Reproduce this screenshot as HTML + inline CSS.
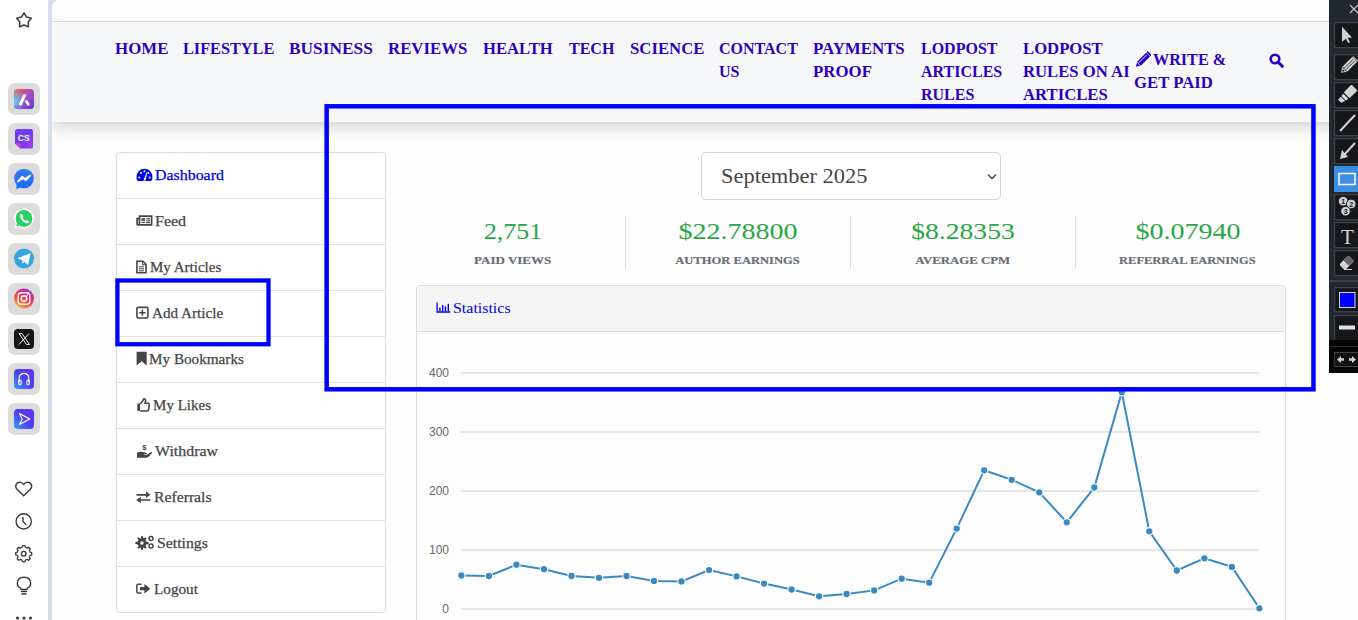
<!DOCTYPE html>
<html><head><meta charset="utf-8">
<style>
*{margin:0;padding:0;box-sizing:border-box}
html,body{width:1358px;height:620px;overflow:hidden;background:#fff;font-family:"Liberation Serif",serif}
.abs{position:absolute}
#strip{left:48px;top:0;width:20px;height:620px;background:#d4dfe9}
#page{left:52px;top:0;width:1316px;height:620px;background:#fdfdfd;border-top-left-radius:8px;overflow:hidden}
#topbar{left:0;top:0;width:100%;height:22px;background:#fefefe;border-bottom:1px solid #dcdcdc}
#nav{left:0;top:22px;width:100%;height:100px;background:#f6f7f9;box-shadow:0 5px 13px rgba(0,0,0,.17)}
.nv{position:absolute;font:700 16px/22.9px "Liberation Serif",serif;color:#2e00b8;white-space:nowrap;transform-origin:0 0}
.menu{left:116px;top:152px;width:270px;height:461px;border:1px solid #dedede;border-radius:4px;background:#fff}
.mi{position:absolute;left:0;width:268px;height:46px;border-top:1px solid #e3e3e3}
.mt{position:absolute;font:400 15px/18px "Liberation Serif",serif;color:#454545;white-space:nowrap;transform-origin:0 0;-webkit-text-stroke:.25px currentColor}
.num{position:absolute;font:400 24px/28px "Liberation Serif",serif;color:#28a745;white-space:nowrap;text-align:center;width:225px}
.lbl{position:absolute;font:700 11px/14px "Liberation Serif",serif;color:#6a6f76;-webkit-text-stroke:.2px currentColor;white-space:nowrap;text-align:center;width:225px}
.num span,.lbl span{display:inline-block}
.vsep{position:absolute;top:216px;width:1px;height:53px;background:#dfe2e6}
.ylab{position:absolute;font:400 12px/14px "Liberation Sans",sans-serif;color:#666;text-align:right;width:30px}
.grid{position:absolute;left:461px;width:798px;height:2px;background:#e6e6e6}
.ico{position:absolute;left:8px;width:32px;height:32px;border-radius:7px;background:#dcdcdc}
.tb{position:absolute;left:1334px;width:30px;height:26px;border:2px solid #3a3f47;background:#16181c}
</style></head><body>
<div id="strip" class="abs"></div>
<div id="page" class="abs">
  <div id="topbar" class="abs"></div>
  <div id="nav" class="abs"></div>
</div>
<!-- NAV -->
<div class="nv" style="left:115px;top:37.7px;transform:scaleX(1.055)">HOME</div>
<div class="nv" style="left:183px;top:37.7px;transform:scaleX(1.016)">LIFESTYLE</div>
<div class="nv" style="left:288.8px;top:37.7px;transform:scaleX(1.084)">BUSINESS</div>
<div class="nv" style="left:388px;top:37.7px;transform:scaleX(1.05)">REVIEWS</div>
<div class="nv" style="left:483px;top:37.7px;transform:scaleX(1.04)">HEALTH</div>
<div class="nv" style="left:569px;top:37.7px">TECH</div>
<div class="nv" style="left:630px;top:37.7px;transform:scaleX(1.046)">SCIENCE</div>
<div class="nv" style="left:719px;top:37.7px">CONTACT<br>US</div>
<div class="nv" style="left:813px;top:37.7px;transform:scaleX(1.053)">PAYMENTS<br>PROOF</div>
<div class="nv" style="left:921px;top:37.7px">LODPOST<br>ARTICLES<br>RULES</div>
<div class="nv" style="left:1022.7px;top:37.7px;transform:scaleX(1.043)">LODPOST<br>RULES ON AI<br>ARTICLES</div>
<div class="nv" style="left:1153px;top:49.05px;transform:scaleX(1.01)">WRITE &amp;</div>
<div class="nv" style="left:1134.2px;top:72.2px;transform:scaleX(1.045)">GET PAID</div>
<svg class="abs" style="left:1134px;top:51px" width="17" height="17" viewBox="1134 51 17 17"><g transform="translate(1142.5,60.2) rotate(45) scale(.93)"><path d="M-3 -8.5 L3 -8.5 L3 5.2 L0 10 L-3 5.2 Z" fill="#2e00b8"/><rect x="-3" y="-11" width="6" height="2" rx=".8" fill="#2e00b8"/><path d="M-.9 -7 L-.9 4.5" stroke="#f6f7f9" stroke-width=".9"/><path d="M-3 5.6 L3 5.6" stroke="#f6f7f9" stroke-width=".8"/></g></svg>
<svg class="abs" style="left:1269px;top:53px" width="15" height="15" viewBox="0 0 15 15"><circle cx="6" cy="6" r="4.3" fill="none" stroke="#2e00b8" stroke-width="2.6"/><path d="M9 9 L13.3 13.3" stroke="#2e00b8" stroke-width="3" stroke-linecap="round"/></svg>

<!-- MENU -->
<div class="abs menu"></div>
<div class="abs" style="left:117px;top:198px;width:268px;height:1px;background:#e3e3e3;box-shadow:0 46px 0 #e3e3e3,0 92px 0 #e3e3e3,0 138px 0 #e3e3e3,0 184px 0 #e3e3e3,0 230px 0 #e3e3e3,0 276px 0 #e3e3e3,0 322px 0 #e3e3e3,0 368px 0 #e3e3e3"></div>
<div class="mt" style="left:155px;top:166px;color:#0000e6;transform:scaleX(1.06)">Dashboard</div>
<div class="mt" style="left:154.8px;top:212px;transform:scaleX(1.067)">Feed</div>
<div class="mt" style="left:150px;top:258px">My Articles</div>
<div class="mt" style="left:151.8px;top:304px;transform:scaleX(1.01)">Add Article</div>
<div class="mt" style="left:149.2px;top:350px;transform:scaleX(1.012)">My Bookmarks</div>
<div class="mt" style="left:153.1px;top:396px">My Likes</div>
<div class="mt" style="left:155.3px;top:442px;transform:scaleX(1.062)">Withdraw</div>
<div class="mt" style="left:153.9px;top:488px;transform:scaleX(1.047)">Referrals</div>
<div class="mt" style="left:157px;top:534px;transform:scaleX(1.05)">Settings</div>
<div class="mt" style="left:153.8px;top:580px;transform:scaleX(1.014)">Logout</div>

<!-- SELECT -->
<div class="abs" style="left:701px;top:152px;width:300px;height:48px;border:1px solid #cfd4da;border-radius:5px;background:#fff"></div>
<div class="abs" style="left:720.6px;top:162.8px;font:400 22px/26px 'Liberation Serif',serif;color:#454545;white-space:nowrap;transform:scaleX(1.02);transform-origin:0 0">September 2025</div>
<svg class="abs" style="left:986px;top:172px" width="12" height="9" viewBox="0 0 12 9"><path d="M2 2.5 L6 6.5 L10 2.5" fill="none" stroke="#555" stroke-width="1.6"/></svg>

<!-- STATS -->
<div class="num" style="left:400px;top:217px"><span style="transform:scaleX(1.078)">2,751</span></div>
<div class="num" style="left:625px;top:217px"><span style="transform:scaleX(1.169)">$22.78800</span></div>
<div class="num" style="left:850px;top:217px"><span style="transform:scaleX(1.151)">$8.28353</span></div>
<div class="num" style="left:1075px;top:217px"><span style="transform:scaleX(1.167)">$0.07940</span></div>
<div class="lbl" style="left:400px;top:253px"><span style="transform:scaleX(1.18)">PAID VIEWS</span></div>
<div class="lbl" style="left:625px;top:253px"><span style="transform:scaleX(1.141)">AUTHOR EARNINGS</span></div>
<div class="lbl" style="left:850px;top:253px"><span style="transform:scaleX(1.165)">AVERAGE CPM</span></div>
<div class="lbl" style="left:1075px;top:253px"><span style="transform:scaleX(1.131)">REFERRAL EARNINGS</span></div>
<div class="vsep" style="left:625px"></div>
<div class="vsep" style="left:850px"></div>
<div class="vsep" style="left:1075px"></div>

<!-- CHART CARD -->
<div class="abs" style="left:416px;top:285px;width:870px;height:400px;border:1px solid #dcdcdc;border-radius:4px;background:#fdfdfd"></div>
<div class="abs" style="left:417px;top:286px;width:868px;height:46px;background:#f5f5f5;border-bottom:1px solid #dcdcdc;border-radius:3px 3px 0 0"></div>
<div class="mt" style="left:453.4px;top:298.7px;color:#0000e6;transform:scaleX(1.063);-webkit-text-stroke:0">Statistics</div>
<div class="grid" style="top:372px"></div>
<div class="grid" style="top:431px"></div>
<div class="grid" style="top:490px"></div>
<div class="grid" style="top:549px"></div>
<div class="grid" style="top:608px"></div>
<div class="ylab" style="left:419px;top:365.8px">400</div>
<div class="ylab" style="left:419px;top:424.8px">300</div>
<div class="ylab" style="left:419px;top:483.8px">200</div>
<div class="ylab" style="left:419px;top:542.8px">100</div>
<div class="ylab" style="left:419px;top:601.8px">0</div>
<svg class="abs" style="left:0;top:0" width="1358" height="620"><path d="M461.4,575.5 L488.9,576.0 L516.4,564.7 L544.0,569.2 L571.5,576.0 L599.0,577.8 L626.5,576.0 L654.0,580.9 L681.5,581.4 L709.1,570.1 L736.6,576.4 L764.1,583.6 L791.6,589.5 L819.1,596.3 L846.6,594.0 L874.2,590.4 L901.7,578.7 L929.2,582.7 L956.7,528.6 L984.2,470.3 L1011.7,479.8 L1039.3,492.4 L1066.8,522.3 L1094.3,487.5 L1121.8,392.2 L1149.3,531.3 L1176.8,570.5 L1204.4,558.3 L1231.9,566.9 L1259.4,608.3" fill="none" stroke="#3b89c1" stroke-width="2"/><g fill="#3b89c1" stroke="#fff" stroke-width="1.1"><circle cx="461.4" cy="575.5" r="3.7"/><circle cx="488.9" cy="576.0" r="3.7"/><circle cx="516.4" cy="564.7" r="3.7"/><circle cx="544.0" cy="569.2" r="3.7"/><circle cx="571.5" cy="576.0" r="3.7"/><circle cx="599.0" cy="577.8" r="3.7"/><circle cx="626.5" cy="576.0" r="3.7"/><circle cx="654.0" cy="580.9" r="3.7"/><circle cx="681.5" cy="581.4" r="3.7"/><circle cx="709.1" cy="570.1" r="3.7"/><circle cx="736.6" cy="576.4" r="3.7"/><circle cx="764.1" cy="583.6" r="3.7"/><circle cx="791.6" cy="589.5" r="3.7"/><circle cx="819.1" cy="596.3" r="3.7"/><circle cx="846.6" cy="594.0" r="3.7"/><circle cx="874.2" cy="590.4" r="3.7"/><circle cx="901.7" cy="578.7" r="3.7"/><circle cx="929.2" cy="582.7" r="3.7"/><circle cx="956.7" cy="528.6" r="3.7"/><circle cx="984.2" cy="470.3" r="3.7"/><circle cx="1011.7" cy="479.8" r="3.7"/><circle cx="1039.3" cy="492.4" r="3.7"/><circle cx="1066.8" cy="522.3" r="3.7"/><circle cx="1094.3" cy="487.5" r="3.7"/><circle cx="1121.8" cy="392.2" r="3.7"/><circle cx="1149.3" cy="531.3" r="3.7"/><circle cx="1176.8" cy="570.5" r="3.7"/><circle cx="1204.4" cy="558.3" r="3.7"/><circle cx="1231.9" cy="566.9" r="3.7"/><circle cx="1259.4" cy="608.3" r="3.7"/></g></svg>

<!-- ANNOTATIONS -->
<svg class="abs" style="left:0;top:0" width="1358" height="620"><g fill="none" stroke="#0000ff" stroke-width="4.5"><rect x="326.65" y="106.3" width="986.8" height="283"/><rect x="117.4" y="280.5" width="151.1" height="63.75" stroke-width="4.3"/></g></svg>
<svg class="abs" style="left:0;top:0" width="1358" height="620">
<!-- dashboard tachometer -->
<path d="M136.6 178.8 Q136.6 181 138.8 181 L150.1 181 Q152.3 181 152.3 178.8 L152.3 176.6 A7.85 7.85 0 0 0 136.6 176.6 Z" fill="#0000e6"/>
<g fill="#fff"><circle cx="139.3" cy="177.5" r="1"/><circle cx="141" cy="173" r="1"/><circle cx="144.4" cy="171.2" r="1"/><circle cx="149.6" cy="177.5" r="1"/><circle cx="148.4" cy="173" r="1"/></g>
<path d="M143.4 180.5 L146.8 172 L147.3 172.2 L145.6 180.5 Z" fill="#fff"/>
<!-- feed newspaper -->
<g fill="none" stroke="#454545" stroke-width="1.7">
<path d="M139.5 216.1 L151.6 216.1 L151.6 224.8 L137.8 224.8 Q137.1 224.8 137.1 224 L137.1 218.6 L139.5 218.6 Z"/>
<path d="M139.5 218.6 L139.5 224.4"/>
</g>
<g fill="#454545"><rect x="141.5" y="218.2" width="3.6" height="2.6"/><rect x="141.5" y="221.8" width="3.6" height="1.2"/><rect x="146.3" y="218.2" width="3.6" height="1.2"/><rect x="146.3" y="220.2" width="3.6" height="1.2"/><rect x="146.3" y="222" width="3.6" height="1.2"/></g>
<!-- file-text-o -->
<path d="M136.9 261.3 L143 261.3 L146 264.3 L146 272.7 L136.9 272.7 Z" fill="none" stroke="#454545" stroke-width="1.6"/>
<path d="M142.6 261.2 L142.6 264.7 L146 264.7" fill="none" stroke="#454545" stroke-width="1.1"/>
<path d="M138.8 266.8 L144 266.8 M138.8 268.8 L144 268.8 M138.8 270.8 L144 270.8" stroke="#454545" stroke-width="1"/>
<!-- plus-square-o -->
<rect x="136.9" y="307.4" width="11" height="10.6" rx="1.2" fill="none" stroke="#454545" stroke-width="1.6"/>
<path d="M142.4 309.6 L142.4 315.8 M139.3 312.7 L145.5 312.7" stroke="#454545" stroke-width="1.5"/>
<!-- bookmark -->
<path d="M136.6 351.8 L146.7 351.8 L146.7 365.6 L141.65 361.2 L136.6 365.6 Z" fill="#454545"/>
<!-- thumbs-o-up -->
<path d="M137.3 403.5 L140 403.5 L140 410.9 L137.3 410.9 Z" fill="#454545"/>
<path d="M140.2 403.9 L142.7 400.9 Q143.5 399.7 143.5 398.9 Q144.7 398.5 145.4 399.7 Q146 401.1 145 403.3 L148.4 403.3 Q149.6 403.7 149.2 405.1 Q148.8 409.7 148 410.6 Q147.5 411 146.5 411 L140.2 411" fill="none" stroke="#454545" stroke-width="1.6" stroke-linejoin="round"/>
<!-- hand-holding-usd -->
<path d="M137 453.5 Q137 452.5 138 452.2 Q140.5 451.3 143 452 L146.2 452.8 Q147.2 453.2 146.6 454 L143.5 454 Q144.6 455 147 454.4 L150.8 452.2 Q152.3 451.8 152.3 452.8 L148.5 456.7 Q147.6 457.7 146 457.7 L137 457.7 Z" fill="#454545"/>
<text x="144.4" y="450.3" font-family="Liberation Sans" font-weight="700" font-size="7.5" fill="#454545" text-anchor="middle">$</text>
<!-- exchange -->
<path d="M136.5 494.8 L148.5 494.8 M150.4 500 L138.4 500" stroke="#454545" stroke-width="1.7"/>
<path d="M146 491.5 L150.4 494.8 L146 498.1 Z M140.8 496.7 L136.2 500 L140.8 503.3 Z" fill="#454545"/>
<!-- cogs -->
<g fill="#454545">
<circle cx="142" cy="543" r="4.5"/>
<path d="M141 536.3 L143 536.3 L143.6 538.8 L141 539 Z M141 549.7 L143 549.7 L143.4 547 L140.6 547 Z M135.4 542 L135.4 544 L138 544.6 L138 541.4 Z M148.6 542 L148.6 544 L146 544.6 L146 541.4 Z M137.2 538.6 L138.6 537.2 L140.6 538.8 L138.8 540.6 Z M146.8 547.4 L145.4 548.8 L143.4 547.2 L145.2 545.4 Z M137.2 547.4 L138.6 548.8 L140.6 547.2 L138.8 545.4 Z M146.8 538.6 L145.4 537.2 L143.4 538.8 L145.2 540.6 Z"/>
</g>
<circle cx="142" cy="543" r="1.7" fill="#fff"/>
<g fill="none" stroke="#454545" stroke-width="1.5"><circle cx="151" cy="538.5" r="2"/><circle cx="151" cy="546" r="2"/></g>
<!-- sign-out -->
<path d="M141.5 584.3 L138.2 584.3 Q136.8 584.3 136.8 585.7 L136.8 591.7 Q136.8 593.1 138.2 593.1 L141.5 593.1" fill="none" stroke="#454545" stroke-width="1.5"/>
<path d="M140 587.1 L144.4 587.1 L144.4 584 L150.3 588.7 L144.4 593.4 L144.4 590.3 L140 590.3 Z" fill="#454545"/>
<!-- statistics bar chart -->
<path d="M437.1 302.6 L437.1 312 L450.2 312" fill="none" stroke="#0000e6" stroke-width="1.3"/>
<g fill="#0000e6"><rect x="439.2" y="307.6" width="1.4" height="3.6"/><rect x="442" y="305" width="1.4" height="6.2"/><rect x="444.8" y="306.4" width="1.4" height="4.8"/><rect x="447.6" y="303.8" width="1.4" height="7.4"/></g>
</svg>
<svg class="abs" style="left:0;top:0" width="48" height="620" viewBox="0 0 48 620">
<defs>
<linearGradient id="g1" x1="0" y1="0" x2="1" y2="1"><stop offset="0" stop-color="#f0683a"/><stop offset=".45" stop-color="#b04fb8"/><stop offset="1" stop-color="#5d3ce8"/></linearGradient>
<radialGradient id="g1b" cx="0" cy=".6" r=".6"><stop offset="0" stop-color="#55d8f5"/><stop offset="1" stop-color="#55d8f5" stop-opacity="0"/></radialGradient>
<linearGradient id="g2" x1="0" y1="0" x2="1" y2="1"><stop offset="0" stop-color="#7a3cf5"/><stop offset=".5" stop-color="#6b3af2"/><stop offset="1" stop-color="#b03ef2"/></linearGradient>
<linearGradient id="g3" x1="0" y1="0" x2="0" y2="1"><stop offset="0" stop-color="#2f7cf6"/><stop offset="1" stop-color="#1a6cf0"/></linearGradient>
<linearGradient id="g6" x1="0.2" y1="1" x2="0.8" y2="0"><stop offset="0" stop-color="#ffc43a"/><stop offset=".35" stop-color="#f5553a"/><stop offset=".7" stop-color="#e0247f"/><stop offset="1" stop-color="#8a3ae0"/></linearGradient>
<linearGradient id="g8" x1="0" y1="1" x2="1" y2="0"><stop offset="0" stop-color="#3a9cf8"/><stop offset=".5" stop-color="#4a40f0"/><stop offset="1" stop-color="#6a2ef0"/></linearGradient>
</defs>
<!-- star -->
<path d="M24.00 13.00 L26.59 17.04 L31.23 18.25 L28.18 21.96 L28.47 26.75 L24.00 25.00 L19.53 26.75 L19.82 21.96 L16.77 18.25 L21.41 17.04 Z" fill="none" stroke="#3a3a3a" stroke-width="1.5" stroke-linejoin="round"/>
<!-- boxes -->
<g fill="#dcdcdc">
<rect x="8" y="83" width="32" height="32" rx="7"/><rect x="8" y="123" width="32" height="32" rx="7"/><rect x="8" y="163" width="32" height="32" rx="7"/>
<rect x="8" y="203" width="32" height="32" rx="7"/><rect x="8" y="243" width="32" height="32" rx="7"/><rect x="8" y="283" width="32" height="32" rx="7"/>
<rect x="8" y="323" width="32" height="32" rx="7"/><rect x="8" y="363" width="32" height="32" rx="7"/><rect x="8" y="403" width="32" height="32" rx="7"/>
</g>
<!-- 1 designer -->
<rect x="14" y="89" width="20" height="20" rx="3.5" fill="url(#g1)"/>
<rect x="14" y="89" width="20" height="20" rx="3.5" fill="url(#g1b)"/>
<path d="M18.8 104.2 L23.4 94.6 Q23.9 93.6 25 94.2 L26.4 95 L21.8 104.8 Q21.3 105.8 20.2 105.2 Z M24.8 101.2 L26.8 99.8 L29.6 103.8 Q30 104.6 29.2 105.1 L27.8 105.9 Z" fill="#fff"/>
<!-- 2 CS -->
<path d="M16.5 129.5 Q16 129 17 129 L31 129 Q33 129 33 131 L33 147 Q33 148.5 31.5 148.5 L20.5 148.5 L15 143.5 L15 131 Q15 129.5 16.5 129.5 Z" fill="url(#g2)"/>
<path d="M15 143 L20.5 148.5 L20.5 144.5 Q20.5 143 19 143 Z" fill="#d03ad8"/>
<text x="23.8" y="141.3" font-family="Liberation Sans" font-weight="700" font-size="8.6" fill="#fff" text-anchor="middle">CS</text>
<!-- 3 messenger -->
<circle cx="24" cy="178.5" r="9.8" fill="url(#g3)"/>
<path d="M16.5 184 L16.5 189.5 L21 186.5 Z" fill="#1a6cf0"/>
<path d="M17.8 181.6 L22.2 176.6 L25 178.9 L30.2 175.4 L25.8 180.4 L23 178.1 Z" fill="#fff" stroke="#fff" stroke-width="1.5" stroke-linejoin="round"/>
<!-- 4 whatsapp -->
<circle cx="24" cy="218.5" r="10" fill="#fff"/>
<path d="M14.6 228.6 L16 223 L19.5 226.5 Z" fill="#fff"/>
<circle cx="24" cy="218.5" r="8.4" fill="#2bd164"/>
<path d="M16.3 226.5 L17.2 222.8 L19.8 225.3 Z" fill="#2bd164"/>
<path d="M20.6 213.8 Q19.3 215.2 20.3 217.7 Q22 221.5 25.8 223 Q28.2 223.8 29 222.2 L29.2 221.2 L27.2 220 L26 221 Q23.8 220 22.5 217.8 L23.4 216.5 L22.3 214.2 Z" fill="#fff"/>
<!-- 5 telegram -->
<circle cx="24" cy="258.5" r="10" fill="#35a5de"/>
<path d="M17.5 258.3 L30.5 253.2 L28.2 265 L24.5 262 L22.2 263.8 L22.6 260.5 Z" fill="#fff"/>
<path d="M22.6 260.5 L28.5 255.5 L24.5 262 Z" fill="#d6e9f5"/>
<!-- 6 instagram -->
<circle cx="24" cy="298.5" r="10" fill="url(#g6)"/>
<rect x="18.2" y="292.7" width="11.6" height="11.6" rx="3.2" fill="none" stroke="#fff" stroke-width="1.4"/>
<circle cx="24" cy="298.5" r="2.7" fill="none" stroke="#fff" stroke-width="1.4"/>
<circle cx="27.4" cy="295.1" r=".8" fill="#fff"/>
<!-- 7 X -->
<rect x="14" y="329" width="20" height="20" rx="4" fill="#141414"/>
<path d="M19 333.5 L22 333.5 L29.5 344.5 L26.5 344.5 Z" fill="none" stroke="#eee" stroke-width="1"/>
<path d="M29 333.5 L19 344.5" stroke="#eee" stroke-width="1"/>
<!-- 8 headphones -->
<rect x="14" y="369" width="20" height="20" rx="4" fill="url(#g8)"/>
<path d="M19.3 382 L19.3 378.5 Q19.3 373.3 24 373.3 Q28.7 373.3 28.7 378.5 L28.7 382" fill="none" stroke="#fff" stroke-width="1.2"/>
<rect x="18.7" y="380" width="2.4" height="4.8" rx="1.1" fill="none" stroke="#fff" stroke-width="1.1"/>
<rect x="26.9" y="380" width="2.4" height="4.8" rx="1.1" fill="none" stroke="#fff" stroke-width="1.1"/>
<!-- 9 play -->
<rect x="14" y="409" width="20" height="20" rx="4" fill="url(#g8)"/>
<path d="M19.5 413.5 L29.8 419 L19.5 424.5 L22.2 419 Z" fill="none" stroke="#fff" stroke-width="1.2" stroke-linejoin="round"/>
<!-- bottom icons -->
<g fill="none" stroke="#3b3b3b" stroke-width="1.4" stroke-linecap="round" stroke-linejoin="round">
<path d="M23.7 495.8 L17.2 489.5 Q14.8 487 16.2 484.4 Q17.8 481.7 20.8 482.4 Q22.6 482.9 23.7 484.6 Q24.8 482.9 26.6 482.4 Q29.6 481.7 31.2 484.4 Q32.6 487 30.2 489.5 Z"/>
<circle cx="23.7" cy="521.4" r="7.6"/>
<path d="M23 517.5 L23 521.5 L26 524.5"/>
<path d="M22.4 545.6 L25 545.6 L25.6 547.6 L27.4 548.5 L29.2 547.5 L31 549.3 L30 551.2 L30.8 553 L32.6 553.6 L32.6 556 L30.8 556.6 L30 558.4 L31 560.3 L29.2 562 L27.4 561 L25.6 561.9 L25 563.8 L22.4 563.8 L21.8 561.9 L20 561 L18.2 562 L16.4 560.3 L17.4 558.4 L16.6 556.6 L14.8 556 L14.8 553.6 L16.6 553 L17.4 551.2 L16.4 549.3 L18.2 547.5 L20 548.5 L21.8 547.6 Z" transform="translate(23.7,553.7) scale(0.9) translate(-23.7,-554.7)"/>
<circle cx="23.7" cy="553.7" r="2.3"/>
<path d="M21 588.5 Q17.3 586.5 17.3 583.6 Q17.3 577.2 24 577.2 Q30.7 577.2 30.7 583.6 Q30.7 586.5 27 588.5 L27 589.5 L21 589.5 Z"/>
<path d="M21.5 591.5 L26.5 591.5 M22 594 L26 594"/>
</g>
<g fill="#3b3b3b"><circle cx="17.5" cy="618" r="1.6"/><circle cx="24" cy="618" r="1.6"/><circle cx="30.5" cy="618" r="1.6"/></g>
</svg>
<svg class="abs" style="left:1329px;top:0" width="29" height="620" viewBox="1329 0 29 620">
<rect x="1329" y="0" width="29" height="373" fill="#23272e"/>
<path d="M1350 5 L1358 13 M1358 5 L1350 13" stroke="#c8c8c8" stroke-width="1.1"/>
<g fill="#15171b" stroke="#3d424a" stroke-width="1.2">
<rect x="1334.6" y="22.6" width="30" height="25"/>
<rect x="1334.6" y="54.6" width="30" height="25"/>
<rect x="1334.6" y="82.6" width="30" height="25"/>
<rect x="1334.6" y="110.6" width="30" height="25"/>
<rect x="1334.6" y="138.6" width="30" height="25"/>
<rect x="1334.6" y="194.6" width="30" height="25"/>
<rect x="1334.6" y="222.6" width="30" height="25"/>
<rect x="1334.6" y="250.6" width="30" height="25"/>
<rect x="1334.6" y="287.6" width="30" height="24"/>
<rect x="1334.6" y="315.6" width="30" height="25"/>
</g>
<rect x="1334" y="166" width="30" height="26" fill="#3b8ee6"/>
<rect x="1339" y="173.5" width="16" height="11" fill="none" stroke="#fff" stroke-width="1.5"/>
<path d="M1329 281 L1358 281" stroke="#454a52" stroke-width="1.5"/>
<rect x="1329" y="340" width="29" height="33" fill="#050505"/>
<path d="M1329 346.5 L1358 346.5" stroke="#2a2d33" stroke-width="1"/>
<rect x="1334.5" y="352.5" width="30" height="14" fill="#111" stroke="#3d424a" stroke-width="1"/>
<!-- icons -->
<path d="M1342 26.8 L1352 37.4 L1347.6 37.8 L1350 42.3 L1348.2 43 L1345.9 38.7 L1342 41.7 Z" fill="#d0d0d0"/>
<g transform="translate(1347.5,66.5) rotate(45)"><rect x="-3.4" y="-10" width="6.8" height="13.5" fill="#d4d4d4"/><path d="M-1.1 -9 L-1.1 3 M1.1 -9 L1.1 3" stroke="#15171b" stroke-width=".8"/><rect x="-3.4" y="-11.5" width="6.8" height="1" fill="#d4d4d4"/><path d="M-3.4 4.2 L0 9 L3.4 4.2 Z" fill="#d4d4d4"/><path d="M-1.6 5.2 L0 7.4 L1.6 5.2 Z" fill="#15171b"/></g>
<g transform="translate(1347,95) rotate(45)"><rect x="-4.2" y="-10.5" width="8.4" height="11" rx="1" fill="#d4d4d4"/><rect x="-3.4" y="1.6" width="6.8" height="3.2" fill="#d4d4d4"/><path d="M-3 5.6 L3 5.6 L1.4 9.6 L-3 9.6 Z" fill="#d4d4d4"/></g>
<path d="M1340 131 L1355 115" stroke="#d4d4d4" stroke-width="2"/>
<path d="M1355 143 L1344 155" stroke="#d4d4d4" stroke-width="2"/><path d="M1340 159 L1342 150 L1348 157 Z" fill="#d4d4d4"/>
<g fill="#cfcfcf" stroke="#15171b" stroke-width=".9"><circle cx="1343.2" cy="201.2" r="4.8"/><circle cx="1351.2" cy="204" r="4.8"/><circle cx="1345.6" cy="211.2" r="4.8"/></g>
<g font-family="Liberation Sans" font-weight="700" font-size="7" fill="#15171b" text-anchor="middle"><text x="1343.2" y="203.8">1</text><text x="1351.2" y="206.6">2</text><text x="1345.6" y="213.8">3</text></g>
<text x="1347.5" y="244" font-family="Liberation Serif" font-size="21" fill="#d4d4d4" text-anchor="middle">T</text>
<g transform="translate(1347,262.5) rotate(-45)"><rect x="-7" y="-4" width="13" height="8" rx="1.5" fill="#d4d4d4"/><rect x="-1" y="-4" width="7" height="8" rx="1" fill="#666"/></g>
<path d="M1344 269.5 L1352 269.5" stroke="#d4d4d4" stroke-width="1"/>
<rect x="1339.5" y="292.5" width="15.5" height="15" fill="#0000ff" stroke="#d8d8c8" stroke-width="1"/>
<rect x="1339" y="325.5" width="16" height="4" fill="#e0e0e0"/>
<path d="M1337 359.5 L1341 356 L1341 358.3 L1344 358.3 L1344 360.7 L1341 360.7 L1341 363 Z M1356 359.5 L1352 356 L1352 358.3 L1349 358.3 L1349 360.7 L1352 360.7 L1352 363 Z" fill="#d0d0d0"/>
</svg>
</body></html>
